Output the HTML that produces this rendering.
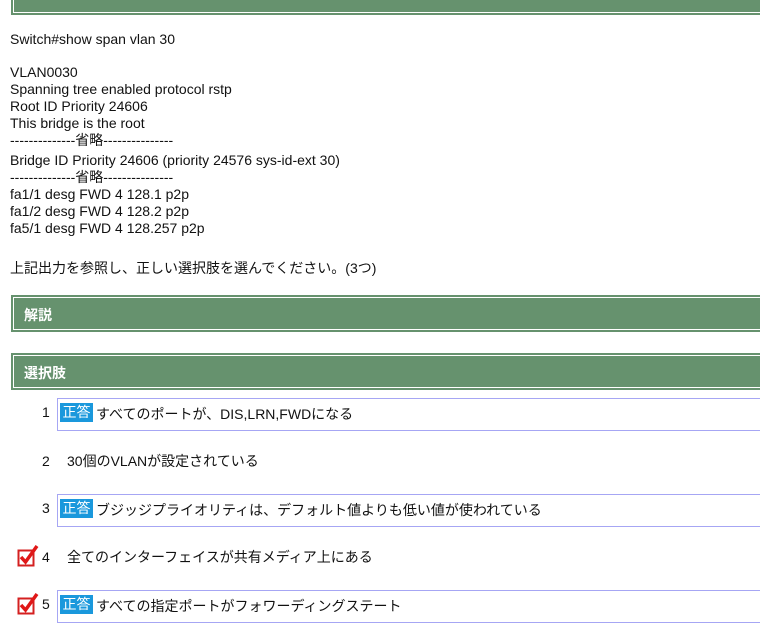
<!DOCTYPE html>
<html><head><meta charset="utf-8"><style>
body{margin:0;width:760px;height:640px;overflow:hidden;background:#fff;font-family:"Liberation Sans","Noto Sans CJK JP",sans-serif;font-size:14px;color:#111;position:relative}
.h{position:absolute;left:11px;width:760px;background:#66926e;}
.h .in{position:absolute;left:2px;top:2px;right:0;bottom:2px;border:1px solid #fff;border-right:none}
.h span{position:absolute;left:13px;color:#fff;font-weight:bold;font-size:14px}
.t{position:absolute;left:10px;line-height:17px;white-space:pre}
.n{position:absolute;left:42px;}
.box{position:absolute;left:57px;width:720px;height:31px;border:1px solid #a6a6f4;}
.lab{position:absolute;left:2px;top:4px;width:33px;height:19px;background:#1a98dc;color:#fff;font-size:14px;line-height:19px;text-align:center}
.bt{position:absolute;left:38px;top:5px;white-space:nowrap}
.ck{position:absolute;left:17px}
</style></head><body>
<div class="h" style="top:-20px;height:35px"><div class="in"></div></div>
<div class="t" style="top:31px">Switch#show span vlan 30</div>
<div class="t" style="top:64px">VLAN0030
Spanning tree enabled protocol rstp
Root ID Priority 24606
This bridge is the root
--------------省略---------------</div>
<div class="t" style="top:152px">Bridge ID Priority 24606 (priority 24576 sys-id-ext 30)
--------------省略---------------
fa1/1 desg FWD 4 128.1 p2p
fa1/2 desg FWD 4 128.2 p2p
fa5/1 desg FWD 4 128.257 p2p</div>
<div class="t" style="top:260px">上記出力を参照し、正しい選択肢を選んでください。(3つ)</div>
<div class="h" style="top:295px;height:37px"><div class="in"></div><span style="top:10px">解説</span></div>
<div class="h" style="top:353px;height:37px"><div class="in"></div><span style="top:10px">選択肢</span></div>

<div class="n" style="top:404px">1</div>
<div class="box" style="top:398px"><div class="lab">正答</div><div class="bt">すべてのポートが、DIS,LRN,FWDになる</div></div>

<div class="n" style="top:453px">2</div>
<div class="t" style="left:67px;top:453px">30個のVLANが設定されている</div>

<div class="n" style="top:500px">3</div>
<div class="box" style="top:494px"><div class="lab">正答</div><div class="bt">ブジッジプライオリティは、デフォルト値よりも低い値が使われている</div></div>

<svg class="ck" style="top:545px" width="22" height="22" viewBox="0 0 22 22"><rect x="1.5" y="5.5" width="15" height="15" fill="#fff" stroke="#d42020" stroke-width="2"/><path d="M4 12 L8.5 17 L20 1" fill="none" stroke="#e01818" stroke-width="3.5"/></svg>
<div class="n" style="top:549px">4</div>
<div class="t" style="left:67px;top:549px">全てのインターフェイスが共有メディア上にある</div>

<svg class="ck" style="top:593px" width="22" height="22" viewBox="0 0 22 22"><rect x="1.5" y="5.5" width="15" height="15" fill="#fff" stroke="#d42020" stroke-width="2"/><path d="M4 12 L8.5 17 L20 1" fill="none" stroke="#e01818" stroke-width="3.5"/></svg>
<div class="n" style="top:596px">5</div>
<div class="box" style="top:590px"><div class="lab">正答</div><div class="bt">すべての指定ポートがフォワーディングステート</div></div>
</body></html>
